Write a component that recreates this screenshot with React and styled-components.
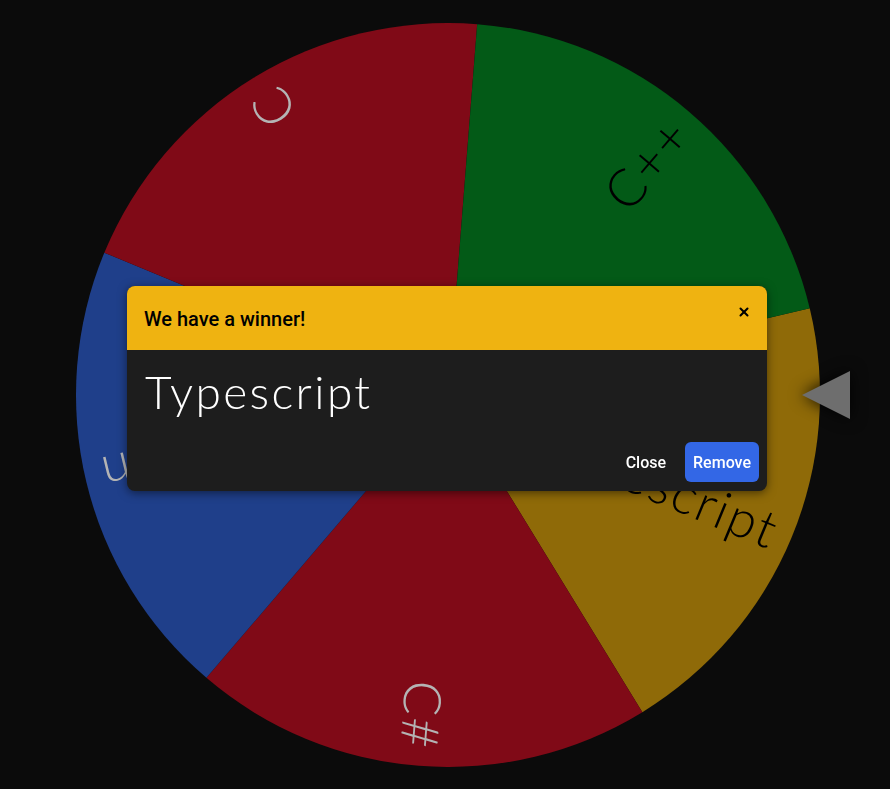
import React from 'react';
import styled, { createGlobalStyle } from 'styled-components';
import { X } from 'lucide-react';

const GlobalStyle = createGlobalStyle`
  html, body {
    margin: 0;
    padding: 0;
    background: #0b0b0b;
    overflow: hidden;
  }
  * { box-sizing: border-box; }
`;

const Page = styled.div`
  width: 100vw;
  height: 100vh;
  display: flex;
  align-items: center;
  justify-content: center;
  padding-left: 6px;
  background: #0b0b0b;
`;

const WheelBox = styled.div`
  position: relative;
  width: 744px;
  height: 744px;
`;

const WheelSvg = styled.svg`
  display: block;
  width: 744px;
  height: 744px;
`;

const Label = styled.text`
  font-family: Lato, "Open Sans", sans-serif;
  font-weight: 300;
  font-size: 52px;
  letter-spacing: 2px;
`;

const Pointer = styled.div`
  position: absolute;
  left: 726px;
  top: 348px;
  width: 0;
  height: 0;
  border-top: 24px solid transparent;
  border-bottom: 24px solid transparent;
  border-right: 48px solid #6e6e6e;
  filter: drop-shadow(0 0 8px rgba(0, 0, 0, 0.9));
`;

const Overlay = styled.div`
  position: fixed;
  inset: 0;
  display: flex;
  align-items: center;
  justify-content: center;
  padding: 0 0 12px 4px;
`;

const Modal = styled.div`
  width: 640px;
  border-radius: 8px;
  overflow: hidden;
  background: #1d1d1d;
  box-shadow: 0 2px 10px rgba(0, 0, 0, 0.5);
  font-family: Roboto, "Liberation Sans", sans-serif;
`;

const Header = styled.div`
  height: 64px;
  display: flex;
  align-items: center;
  justify-content: space-between;
  padding: 0 16px 0 17px;
  background: #efb311;
  color: #000;
`;

const Title = styled.h2`
  margin: 0;
  font-size: 20px;
  font-weight: 500;
  padding-top: 1px;
`;

const CloseIcon = styled.button`
  display: flex;
  align-items: center;
  justify-content: center;
  margin-top: -13px;
  padding: 0;
  border: none;
  background: none;
  color: #000;
  cursor: pointer;
`;

const Body = styled.div`
  padding: 14px 18px 4px;
`;

const Winner = styled.div`
  font-family: Lato, "Open Sans", sans-serif;
  font-weight: 300;
  font-size: 46px;
  line-height: 56px;
  letter-spacing: 2.4px;
  color: #fff;
`;

const Footer = styled.div`
  display: flex;
  justify-content: flex-end;
  align-items: center;
  gap: 11px;
  padding: 18px 8px 9px;
`;

const Button = styled.button`
  height: 40px;
  padding: 0 8px;
  border: none;
  border-radius: 6px;
  font-family: Roboto, "Liberation Sans", sans-serif;
  font-size: 16px;
  font-weight: 500;
  color: #fff;
  background: ${(p) => (p.$primary ? '#3367e6' : 'transparent')};
  cursor: pointer;
`;

const R = 372;

const segments = [
  { label: 'Typescript', mid: 22.5, fill: '#8f6a08', text: '#000' },
  { label: 'C#', mid: 94.5, fill: '#800a17', text: '#b4b4b4' },
  { label: 'Python', mid: 166.5, fill: '#1f3f8a', text: '#b4b4b4' },
  { label: 'C', mid: 238.5, fill: '#800a17', text: '#b4b4b4' },
  { label: 'C++', mid: 310.5, fill: '#035a17', text: '#000' },
];

const pt = (deg) => {
  const a = (deg * Math.PI) / 180;
  return [R * Math.cos(a), R * Math.sin(a)];
};

const wedge = (mid) => {
  const [x0, y0] = pt(mid - 36);
  const [x1, y1] = pt(mid + 36);
  return `M0 0 L${x0} ${y0} A${R} ${R} 0 0 1 ${x1} ${y1} Z`;
};

const Wheel = () => (
  <WheelSvg viewBox={`${-R} ${-R} ${R * 2} ${R * 2}`}>
    {segments.map((s) => (
      <g key={s.label}>
        <path d={wedge(s.mid)} fill={s.fill} />
        <Label
          transform={`rotate(${s.mid})`}
          x={R - 16}
          y={0}
          textAnchor="end"
          dominantBaseline="central"
          fill={s.text}
        >
          {s.label}
        </Label>
      </g>
    ))}
  </WheelSvg>
);

const App = () => (
  <>
    <GlobalStyle />
    <Page>
      <WheelBox>
        <Wheel />
        <Pointer />
      </WheelBox>
    </Page>
    <Overlay>
      <Modal>
        <Header>
          <Title>We have a winner!</Title>
          <CloseIcon aria-label="close">
            <X size={14} strokeWidth={3.5} />
          </CloseIcon>
        </Header>
        <Body>
          <Winner>Typescript</Winner>
        </Body>
        <Footer>
          <Button>Close</Button>
          <Button $primary>Remove</Button>
        </Footer>
      </Modal>
    </Overlay>
  </>
);

export default App;
